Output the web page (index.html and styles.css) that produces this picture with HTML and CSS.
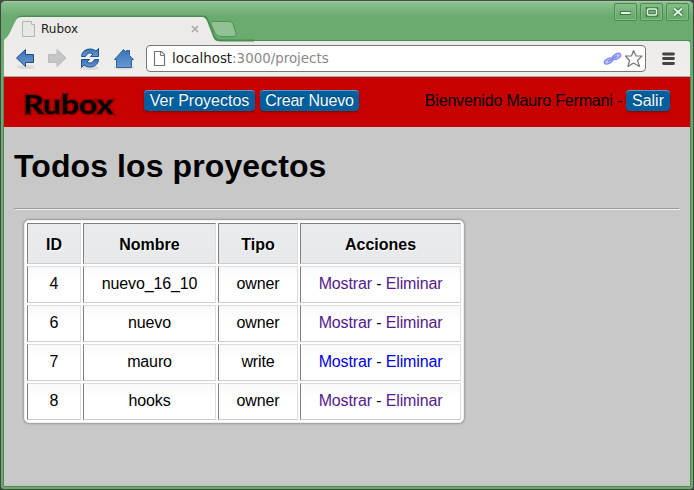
FILE: index.html
```html
<!DOCTYPE html>
<html lang="es">
<head>
<meta charset="utf-8">
<title>Rubox</title>
<link rel="stylesheet" href="styles.css">
</head>
<body>
<div class="window">
  <div class="titlebar">
    <svg class="tabs" width="250" height="30" viewBox="0 0 250 30">
      <path d="M1 30V29C5 27 7 23 9 18L13 8Q14.500 4.500 19 4.500H199Q202.500 4.500 204 9L209 22Q211 28.500 216 28.500H250" fill="none" stroke="#4b8c52" stroke-width="2"/>
      <path d="M0 30V28C4 25 6 21 8 16L12 8Q13.500 5 18 5H198Q201 5 203 9L208 22Q210 30 216 30Z" fill="#edebe9"/>
      <path d="M209 9.500H225Q228 9.500 229 12L232 21Q233 24.500 230 24.500H217Q213 24.500 211 21L207 12Q206 9.500 209 9.500Z" fill="#91c194" stroke="#4f9456"/>
      <path d="M18.500 9.500H27.500L30.500 12.500V24.500H18.500Z" fill="#e5e9e3" stroke="#b2b6b0"/>
      <path d="M27.500 9.500V12.500H30.500" fill="#fff" stroke="#b2b6b0"/>
      <path d="M188 14l6 6m0-6l-6 6" stroke="#aaa8a5" stroke-width="1.600"/>
    </svg>
    <span class="tab-title">Rubox</span>
    <div class="controls">
      <span class="control"><svg width="22" height="16"><path d="M5 9H16" stroke="#387b3d" stroke-width="4"/><path d="M6 9H15.500" stroke="#e6f5e6" stroke-width="2"/></svg></span>
      <span class="control"><svg width="22" height="16"><rect x="6.500" y="5" width="9" height="6" fill="none" stroke="#387b3d" stroke-width="3.500"/><rect x="6.500" y="5" width="9" height="6" rx="1" fill="none" stroke="#e6f5e6" stroke-width="1.500"/></svg></span>
      <span class="control"><svg width="22" height="16"><path d="M7 4.500l8 7m0-7l-8 7" stroke="#387b3d" stroke-width="4"/><path d="M7 4.500l8 7m0-7l-8 7" stroke="#e6f5e6" stroke-width="2"/></svg></span>
    </div>
  </div>
  <div class="toolbar">
    <svg class="nav-icons" width="142" height="36" viewBox="0 0 142 36">
      <defs>
        <linearGradient id="blue" x2="0" y2="1"><stop stop-color="#3973b7"/><stop offset="1" stop-color="#6598cf"/></linearGradient>
      </defs>
      <g fill="#000" opacity=".08"><ellipse cx="22" cy="26" rx="9" ry="2"/><ellipse cx="86" cy="27" rx="9" ry="2"/><ellipse cx="120" cy="26.500" rx="11" ry="2"/></g>
      <path d="M12.500 17L21.500 8.500V13.500H29.500V21.500H21.500V25.500Z" fill="url(#blue)" stroke="#204a87"/>
      <path d="M62 17L53 8.500V13.500H44.500V21.500H53V25.500Z" fill="#c3c5c6" stroke="#b8babb"/>
      <path d="M77.500 15.500C78 8 87 6 92 10L94.500 7.500V15.500H86.500L89 13Q84 10 81.500 15.500Z" fill="url(#blue)" stroke="#204f91"/>
      <path d="M94.500 18.500C94 26 85 28 80 24L77.500 26.500V18.500H85.500L83 21Q88 24 90.500 18.500Z" fill="url(#blue)" stroke="#204f91"/>
      <path d="M112.500 18.500H110.500L119.500 8.500L122.500 11.500V9.500H125.500V14.500L129.500 18.500H127.500V26.500H112.500Z" fill="url(#blue)" stroke="#2d629f"/>
    </svg>
    <div class="address">
      <svg width="25" height="25"><path d="M7.500 5.500H14.500L17.500 8.500V19.500H7.500Z" fill="#fff" stroke="#777" stroke-width="1.200"/><path d="M13.500 5.500V9.500H17.500" fill="none" stroke="#777"/></svg>
      <span class="url">localhost<span class="path">:3000/projects</span></span>
      <svg class="address-end" width="43" height="25">
        <g fill="#c1c8ff" stroke="#7f8df5" stroke-width="1.400"><ellipse cx="6.500" cy="15" rx="4.500" ry="2.400" transform="rotate(-28 6.500 15)"/><ellipse cx="14.500" cy="10.500" rx="4.500" ry="2.400" transform="rotate(-28 14.500 10.500)"/><path d="M6 15.500L15 10" stroke-width="2"/></g>
        <path d="M31.500 4.500L34 10H40L35.500 14.500L37.500 20.500L31.500 17L26 20.500L27.500 14.500L23.500 10H29.500Z" fill="#fff" stroke="#777" stroke-width="1.200" stroke-linejoin="round"/>
      </svg>
    </div>
    <svg class="menu" width="14" height="14"><path d="M2.500 2H12.500M2.500 6.500H12.500M2.500 11.500H12.500" stroke="#444" stroke-width="2.800" stroke-linecap="round"/></svg>
  </div>
  <div class="page">
    <header class="header">
      <svg class="logo" width="96" height="34"><text x="2" y="26" textLength="90" lengthAdjust="spacingAndGlyphs">Rubox</text></svg>
      <a class="button projects">Ver Proyectos</a>
      <a class="button create">Crear Nuevo</a>
      <span class="welcome">Bienvenido Mauro Fermani -</span>
      <a class="button logout">Salir</a>
    </header>
    <main>
      <h1>Todos los proyectos</h1>
      <hr>
      <table>
        <colgroup><col class="id"><col class="name"><col class="type"><col class="actions"></colgroup>
        <thead><tr><th>ID</th><th>Nombre</th><th>Tipo</th><th>Acciones</th></tr></thead>
        <tbody>
          <tr><td>4</td><td>nuevo_16_10</td><td>owner</td><td><a class="visited">Mostrar</a> - <a class="visited">Eliminar</a></td></tr>
          <tr><td>6</td><td>nuevo</td><td>owner</td><td><a class="visited">Mostrar</a> - <a class="visited">Eliminar</a></td></tr>
          <tr><td>7</td><td>mauro</td><td>write</td><td><a class="link">Mostrar</a> - <a class="link">Eliminar</a></td></tr>
          <tr><td>8</td><td>hooks</td><td>owner</td><td><a class="visited">Mostrar</a> - <a class="visited">Eliminar</a></td></tr>
        </tbody>
      </table>
    </main>
  </div>
</div>
</body>
</html>
```
FILE: styles.css
```css
* { box-sizing: border-box; }
body { margin: 0; background: #454545; font: 16px "Liberation Sans", sans-serif; }
svg { display: block; flex: none; }
.window { width: 692px; height: 489px; margin-left: 1px; padding: 0 3px 3px; background: #6aab70; border-top: 1px solid #4b4b4b; border-radius: 5px 5px 3px 3px; display: flex; flex-direction: column; overflow: hidden; }
.titlebar { height: 40px; flex: none; display: flex; position: relative; margin: 0 -3px; padding: 11px 4px 0 3px; background: linear-gradient(#4b8c52, #4b8c52) 240px 38px / 450px 1px no-repeat, linear-gradient(#8bc28f, #6aab70 14px); border-top: 1px solid #a0ce9f; }
.tabs { margin-top: -1px; }
.tab-title { position: absolute; left: 40px; top: 20px; font: 12px "DejaVu Sans", sans-serif; color: #222; }
.controls { display: flex; gap: 3px; margin: -10px 0 0 auto; }
.control { width: 23px; height: 18px; border: 1px solid #4d8c50; border-radius: 2px; box-shadow: inset 0 0 0 1px #87b989; }
.toolbar { height: 36px; flex: none; display: flex; align-items: center; background: linear-gradient(#edebe9, #f0efed); border-bottom: 1px solid #aaa; border-radius: 0 3px 0 0; }
.address { width: 500px; height: 27px; display: flex; align-items: center; background: #fff; border: 1px solid #777; border-radius: 4px; margin-top: -1px; }
.url { font: 13.400px/25px "DejaVu Sans", sans-serif; color: #222; }
.path { color: #888; }
.address-end { margin-left: auto; }
.menu { margin-left: 15px; }
.page { flex: 1; background: #c8c8c8; box-shadow: -1px 0 #4f8454, 1px 0 #4f8454, 0 1px #4f8454; }
.header { height: 50px; background: #c70000; display: flex; align-items: flex-start; padding: 13px 20px 0 17px; }
.logo { margin-top: -2px; overflow: visible; }
.logo text { font: 700 27px Lato, sans-serif; fill: #000; paint-order: stroke; stroke: #7b0000; stroke-width: 3px; stroke-opacity: .6; }
.button { height: 21px; border-radius: 4px; background: #005f9c; color: #f4faff; text-align: center; line-height: 21px; white-space: nowrap; box-shadow: inset 0 1px #6299c0, 0 1px 2px #7a0000; text-shadow: 0 -1px 1px #003e6d; }
.projects { width: 111px; margin-left: 27px; }
.create { width: 99px; margin-left: 5px; letter-spacing: -.2px; }
.welcome { margin-left: auto; line-height: 21px; white-space: nowrap; letter-spacing: -.18px; }
.logout { width: 44px; margin-left: 4px; }
main { padding: 0 10px; }
h1 { font-size: 32px; line-height: 37px; margin: 21px 0 23px; letter-spacing: .1px; }
hr { margin: 0; border: 1px inset #eee; }
table { table-layout: fixed; width: 440px; margin: 10px 0 0 10px; border: 1px solid #eee; border-spacing: 2px; background: #fff; border-radius: 5px; box-shadow: 0 0 2px 1px #999; }
.id { width: 54px; }
.name { width: 133px; }
.type { width: 80px; }
.actions { width: 161px; }
th, td { padding: 0; text-align: center; border: 1px solid #ddd; border-left-color: #808080; border-bottom-color: #ccc; white-space: nowrap; }
th { height: 41px; padding-top: 3px; border-top-color: #808080; background: linear-gradient(#e9ebed, #e8e9ea); text-shadow: 1px 1px #fff; }
td { height: 37px; padding-bottom: 2px; letter-spacing: -.14px; background: linear-gradient(#f9f9f9, #fff 14px); }
.visited { color: #551a8b; }
.link { color: #0000e5; }
```
